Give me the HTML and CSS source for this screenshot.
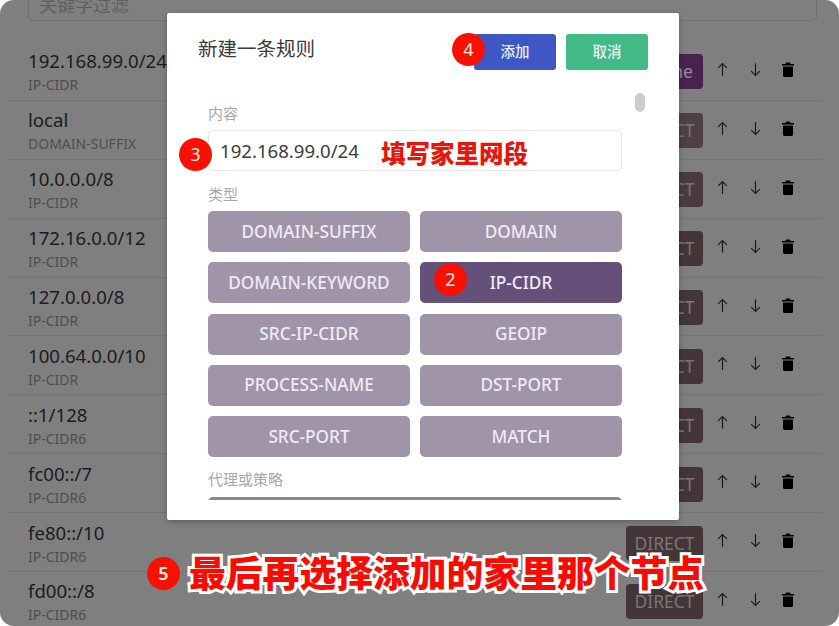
FILE: index.html
```html
<!DOCTYPE html>
<html lang="zh-CN">
<head>
<meta charset="utf-8">
<title>新建一条规则</title>
<link rel="stylesheet" href="styles.css">
</head>
<body>
<svg class="sprite" width="0" height="0" aria-hidden="true">
  <symbol id="up" viewBox="0 0 14 18"><path d="M7 17V1.5M1.5 7 7 1.5 12.5 7" fill="none" stroke="currentColor" stroke-width="1.5"/></symbol>
  <symbol id="down" viewBox="0 0 14 18"><path d="M7 1v15.5M1.5 11 7 16.500 12.500 11" fill="none" stroke="currentColor" stroke-width="1.5"/></symbol>
  <symbol id="trash" viewBox="0 0 12 15"><path d="M12 2H8.800L8 1V0.500H4V1L3.200 2H0V3.500H12V2ZM1 13.500A1.500 1.500 0 0 0 2.500 15H9.500A1.500 1.500 0 0 0 11 13.500V4.500H1V13.500Z" fill="currentColor"/></symbol>
</svg>
<main class="screen">
  <div class="filter">关键字过滤</div>
  <ul class="rules">
    <li class="rule"><div class="rule-text"><div class="rule-name">192.168.99.0/24</div><div class="rule-type">IP-CIDR</div></div><span class="badge badge-home">Home</span><span class="acts"><svg class="ic-up"><use href="#up"/></svg><svg class="ic-up"><use href="#down"/></svg><svg class="ic-trash"><use href="#trash"/></svg></span></li>
    <li class="rule"><div class="rule-text"><div class="rule-name">local</div><div class="rule-type">DOMAIN-SUFFIX</div></div><span class="badge">DIRECT</span><span class="acts"><svg class="ic-up"><use href="#up"/></svg><svg class="ic-up"><use href="#down"/></svg><svg class="ic-trash"><use href="#trash"/></svg></span></li>
    <li class="rule"><div class="rule-text"><div class="rule-name">10.0.0.0/8</div><div class="rule-type">IP-CIDR</div></div><span class="badge">DIRECT</span><span class="acts"><svg class="ic-up"><use href="#up"/></svg><svg class="ic-up"><use href="#down"/></svg><svg class="ic-trash"><use href="#trash"/></svg></span></li>
    <li class="rule"><div class="rule-text"><div class="rule-name">172.16.0.0/12</div><div class="rule-type">IP-CIDR</div></div><span class="badge">DIRECT</span><span class="acts"><svg class="ic-up"><use href="#up"/></svg><svg class="ic-up"><use href="#down"/></svg><svg class="ic-trash"><use href="#trash"/></svg></span></li>
    <li class="rule"><div class="rule-text"><div class="rule-name">127.0.0.0/8</div><div class="rule-type">IP-CIDR</div></div><span class="badge">DIRECT</span><span class="acts"><svg class="ic-up"><use href="#up"/></svg><svg class="ic-up"><use href="#down"/></svg><svg class="ic-trash"><use href="#trash"/></svg></span></li>
    <li class="rule"><div class="rule-text"><div class="rule-name">100.64.0.0/10</div><div class="rule-type">IP-CIDR</div></div><span class="badge">DIRECT</span><span class="acts"><svg class="ic-up"><use href="#up"/></svg><svg class="ic-up"><use href="#down"/></svg><svg class="ic-trash"><use href="#trash"/></svg></span></li>
    <li class="rule"><div class="rule-text"><div class="rule-name">::1/128</div><div class="rule-type">IP-CIDR6</div></div><span class="badge">DIRECT</span><span class="acts"><svg class="ic-up"><use href="#up"/></svg><svg class="ic-up"><use href="#down"/></svg><svg class="ic-trash"><use href="#trash"/></svg></span></li>
    <li class="rule"><div class="rule-text"><div class="rule-name">fc00::/7</div><div class="rule-type">IP-CIDR6</div></div><span class="badge">DIRECT</span><span class="acts"><svg class="ic-up"><use href="#up"/></svg><svg class="ic-up"><use href="#down"/></svg><svg class="ic-trash"><use href="#trash"/></svg></span></li>
    <li class="rule"><div class="rule-text"><div class="rule-name">fe80::/10</div><div class="rule-type">IP-CIDR6</div></div><span class="badge">DIRECT</span><span class="acts"><svg class="ic-up"><use href="#up"/></svg><svg class="ic-up"><use href="#down"/></svg><svg class="ic-trash"><use href="#trash"/></svg></span></li>
    <li class="rule"><div class="rule-text"><div class="rule-name">fd00::/8</div><div class="rule-type">IP-CIDR6</div></div><span class="badge">DIRECT</span><span class="acts"><svg class="ic-up"><use href="#up"/></svg><svg class="ic-up"><use href="#down"/></svg><svg class="ic-trash"><use href="#trash"/></svg></span></li>
  </ul>

  <section class="modal">
    <header class="modal-head">
      <h2 class="modal-title">新建一条规则</h2>
      <div class="modal-actions">
        <button class="btn btn-add">添加</button>
        <button class="btn btn-cancel">取消</button>
      </div>
    </header>
    <div class="modal-body">
      <span class="thumb"></span>
      <div class="label">内容</div>
      <div class="field">192.168.99.0/24</div>
      <div class="label label-gap">类型</div>
      <div class="types">
        <button class="type">DOMAIN-SUFFIX</button>
        <button class="type">DOMAIN</button>
        <button class="type">DOMAIN-KEYWORD</button>
        <button class="type type-on">IP-CIDR</button>
        <button class="type">SRC-IP-CIDR</button>
        <button class="type">GEOIP</button>
        <button class="type">PROCESS-NAME</button>
        <button class="type">DST-PORT</button>
        <button class="type">SRC-PORT</button>
        <button class="type">MATCH</button>
      </div>
      <div class="label label-gap">代理或策略</div>
      <div class="proxy-box"></div>
    </div>
  </section>

  <span class="step step-2">2</span>
  <span class="step step-3">3</span>
  <span class="step step-4">4</span>
  <span class="step step-5">5</span>
  <span class="note-field">填写家里网段</span>
  <span class="note-bottom">最后再选择添加的家里那个节点</span>
</main>
</body>
</html>
```
FILE: styles.css
```css
* { box-sizing: border-box; }
html, body { margin: 0; padding: 0; background: #fff; }
body { width: 839px; height: 626px; overflow: hidden; font-family: "Noto Sans", "Noto Sans CJK SC", sans-serif; }
.sprite { position: absolute; }

.screen {
  position: relative;
  width: 839px;
  height: 626px;
  background: #7f7f7f;
  border-radius: 14px;
  overflow: hidden;
  padding: 0 17px 0 8px;
}

.filter {
  margin: -15px 0 0 20px;
  width: 789px;
  height: 36px;
  border: 1px solid #6f6f6f;
  border-radius: 5px;
  padding: 0 10px;
  font-size: 18px;
  line-height: 38px;
  color: #606060;
}

.rules { list-style: none; margin: 21px 0 0; padding: 0; }
.rule {
  display: flex;
  align-items: center;
  height: 58.900px;
  border-bottom: 1px solid #747474;
  padding-left: 20px;
}
.rule-text { flex: 1; }
.rule-name { font-size: 18.600px; line-height: 27px; color: #1c1c1c; }
.rule-type { font-size: 14px; line-height: 18px; color: #4f4f4f; margin-top: 2px; }

.badge {
  width: 77px;
  height: 35px;
  margin-top: 2px;
  border-radius: 4px;
  background: #443539;
  color: #777;
  font-size: 17.500px;
  line-height: 35px;
  text-align: center;
}
.rule:nth-child(2) .badge { background: #4f4045; }
.rule:nth-child(3) .badge { background: #4a3b40; }
.rule .badge-home { background: #48234e; color: #9a8a9c; text-align: right; padding-right: 10px; }

.acts {
  display: flex;
  align-items: center;
  gap: 21.500px;
  width: 119px;
  padding-left: 14px;
  margin-top: -3px;
  color: #0d0d0d;
}
.ic-up { width: 11px; height: 15px; color: #1a1a1a; }
.ic-trash { width: 12px; height: 15px; color: #000; }

.modal {
  position: absolute;
  left: 167px;
  top: 13px;
  width: 512px;
  height: 507px;
  background: #fff;
  border-radius: 2px;
  box-shadow: 0 2px 6px rgba(0, 0, 0, .25);
}
.modal-head {
  display: flex;
  justify-content: space-between;
  height: 80px;
  padding: 21px 31px 0;
}
.modal-title { margin: 0; font-size: 19.500px; font-weight: 400; line-height: 29px; color: #3a3a3a; }
.modal-actions { display: flex; gap: 10px; }
.btn {
  width: 82px;
  height: 36px;
  border: 0;
  border-radius: 3px;
  padding: 0 0 3px;
  font: 500 14.500px "Noto Sans CJK SC", sans-serif;
  color: #e8f0f4;
}
.btn-add { background: #3d58c4; }
.btn-cancel { background: #42ba85; }

.modal-body {
  position: relative;
  height: 407px;
  overflow: hidden;
  padding: 11px 57px 0 41px;
}
.thumb {
  position: absolute;
  right: 34px;
  top: 0;
  width: 10px;
  height: 19px;
  border-radius: 5px;
  background: #cccccc;
}
.label { font: 15px/18px "Noto Sans CJK SC", sans-serif; color: #a8a8a8; }
.label-gap { margin-top: 13px; }
.field {
  margin: 8px 0 14px;
  height: 41px;
  border: 1px solid #e8e8e8;
  border-radius: 4px;
  padding-left: 11px;
  font-size: 18.600px;
  line-height: 39px;
  color: #3c3c3c;
}
.field + .label { margin-top: 0; }
.types {
  display: grid;
  grid-template-columns: 202px 202px;
  grid-auto-rows: 41px;
  gap: 10.250px 10px;
  margin-top: 8px;
}
.type {
  border: 0;
  border-radius: 5px;
  background: #a094a9;
  font: 500 17.200px "Noto Sans", sans-serif;
  color: #efeaf2;
  padding: 0 0 1px;
}
.type-on { background: #65507a; }
.proxy-box {
  margin-top: 9px;
  height: 41px;
  border-radius: 5px;
  background: #8b868f;
}

.step {
  position: absolute;
  width: 33px;
  height: 33px;
  border-radius: 50%;
  background: #fa1000;
  color: #fff0e8;
  font-size: 18px;
  line-height: 33px;
  text-align: center;
}
.step-2 { left: 434px; top: 263px; }
.step-3 { left: 179px; top: 138px; }
.step-4 { left: 452px; top: 33px; }
.step-5 { left: 147px; top: 557px; font-weight: 600; }

.note-field {
  position: absolute;
  left: 381px;
  top: 135px;
  font: 800 24.500px/36px "Noto Sans CJK SC", sans-serif;
  color: #e8160a;
}
.note-bottom {
  position: absolute;
  left: 189px;
  top: 544px;
  font: 900 36.800px/54px "Noto Sans CJK SC", sans-serif;
  color: #f80b00;
  white-space: nowrap;
  -webkit-text-stroke: 6px #fff;
  paint-order: stroke fill;
}
```
